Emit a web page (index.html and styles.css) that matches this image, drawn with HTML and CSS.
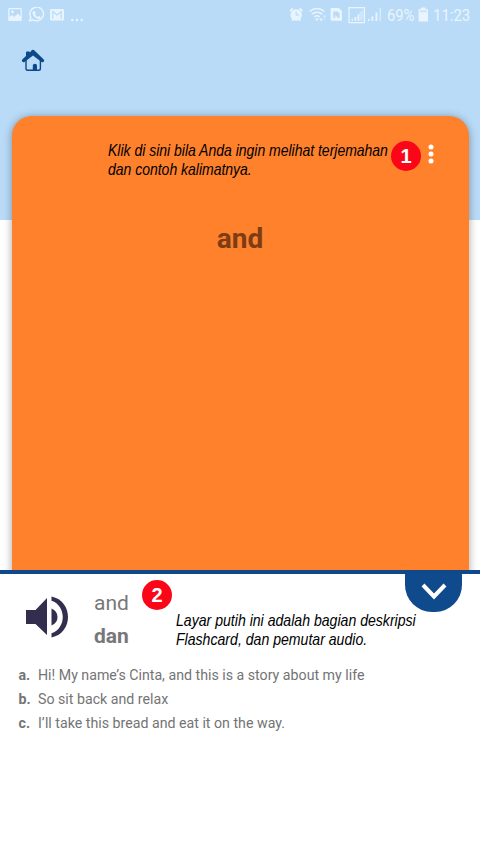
FILE: index.html
```html
<!DOCTYPE html>
<html lang="id">
<head>
<meta charset="utf-8">
<meta name="viewport" content="width=device-width, initial-scale=1">
<title>Flashcard</title>
<link rel="stylesheet" href="styles.css">
</head>
<body>
<div class="screen">
  <header class="status">
    <svg class="status-left" width="76" height="20" viewBox="0 0 76 20" fill="currentColor">
      <path fill-rule="evenodd" d="M1.500 1h11a1.300 1.300 0 0 1 1.300 1.300v10.400a1.300 1.300 0 0 1-1.300 1.300h-11a1.300 1.300 0 0 1-1.300-1.300V2.300A1.300 1.300 0 0 1 1.500 1zM1.500 2.300V10l2.500-2 2 2 4-3.500 2.600 3V2.300z"/>
      <circle cx="4.500" cy="5" r="1.400"/>
      <path d="M21.800 13.700l1-3.400a6.800 6.800 0 1 1 2.500 2.500z" fill="none" stroke="currentColor" stroke-width="1.400"/>
      <path d="M25.400 4.200l1.300-.3 1.100 2.300-.9 1.100c.7 1.300 1.500 2.100 2.800 2.700l1-1.100 2.200 1.100c0 1.300-1.100 2.100-2.300 2.100-3-.4-5.900-3.400-6.100-6 0-.8.300-1.500.9-1.900z"/>
      <rect x="42" y="2" width="14" height="11.500" rx="1.200"/>
      <path d="M44.800 12V4.500L49 8l4.200-3.500V12" fill="none" stroke="#b9dbf7" stroke-width="1.200"/>
      <circle cx="64.300" cy="13" r="1.200"/><circle cx="69" cy="13" r="1.200"/><circle cx="73.700" cy="13" r="1.200"/>
    </svg>
    <svg class="status-right" width="104" height="20" viewBox="0 0 104 20" fill="currentColor">
      <circle cx="7.200" cy="8" r="5.700"/>
      <path d="M1 4l3-2.500M13.400 4l-3-2.500M3 13.500l2-2M11.500 13.500l-2-2" stroke="currentColor" stroke-width="1.800"/>
      <path d="M7.200 4.500V8h3" fill="none" stroke="#b9dbf7" stroke-width="1.200"/>
      <g fill="none" stroke="currentColor" stroke-width="1.500"><path d="M20.500 4.500q7.500-6 15 0M22.800 7.200q5.200-4 10.400 0M25.200 9.800q2.800-2 5.600 0"/></g>
      <path d="M25.800 11.500h4L28 14zM30.200 11.500h3.600L32 14.500z"/><path opacity=".6" d="M34 10l1.700-2.500L37.400 10h-1.200v3h-1v-3z"/>
      <path fill-rule="evenodd" d="M42.800 1h7l3.200 3v8.700q0 1-1 1h-9.200q-1.200 0-1.200-1.200V2.200Q41.600 1 42.800 1zM44.300 4.500v6.500h2V8L49 11h1.500V6.500l-2-2z"/>
      <path d="M60 0.600h15.500v15H60z" fill="none" stroke="currentColor" stroke-width="1.200"/>
      <path d="M62.500 13.800v-2H64v2zM65.500 13.800V10h1.800v3.800zM68.500 13.800V7.500h1.800v6.300z"/><path opacity=".45" d="M70.500 13.800V5.500L74.500 2v11.800z"/>
      <path d="M79 14v-2h1.500v2zM82.500 14V9.500h1.800V14zM86.500 14V5.500h1.800V14z"/><path opacity=".6" d="M90.500 14V1H92v13z"/>
    </svg>
    <span class="percent">69%</span>
    <svg class="battery" width="11" height="16" viewBox="0 0 11 16" fill="currentColor"><path d="M3 .5h4.500V2H10v12.500H.6V2H3z"/><path d="M1.800 3.200h7v2.200h-7z" fill="#b9dbf7" opacity=".6"/></svg>
    <span class="clock">11:23</span>
  </header>
  <nav class="nav">
    <svg width="24" height="24" viewBox="0 0 24 24">
      <path d="M5 11V19.500q0 1.800 1.800 1.800h10.800q1.800 0 1.800-1.800V11" fill="none" stroke="#0d4888" stroke-width="1.400"/>
      <path d="M11.900 .8q1 0 1.800.9L22.500 10.200q1.400 1.200.4 2.300-1.300 1.300-2.700.2L12 6.500l-8.200 6.200q-1.400 1.100-2.600-.2-1-1.100.3-2.300L5 7V3.400q0-1 1-1h2.200l1 .9 1-1.600q.8-.9 1.700-.9z" fill="#0d4888"/>
      <path d="M11.800 22v-5.300q0-2 2.100-2t2.100 2V22z" fill="#0d4888"/>
    </svg>
  </nav>
  <main class="deck">
    <section class="card">
      <div class="card-top">
        <p class="hint"><span class="line">Klik di sini bila Anda ingin melihat terjemahan</span><span class="line">dan contoh kalimatnya.</span></p>
        <span class="badge">1</span>
        <svg class="more" width="6" height="20" viewBox="0 0 6 20" fill="#fff"><circle cx="3" cy="3" r="2.500"/><circle cx="3" cy="10" r="2.500"/><circle cx="3" cy="17" r="2.500"/></svg>
      </div>
      <h1 class="word">and</h1>
    </section>
  </main>
  <section class="details">
    <button class="toggle" aria-label="Tutup"><svg width="26" height="18" viewBox="0 0 26 18"><path d="M2 2l11 11.500L24 2" fill="none" stroke="#fff" stroke-width="4"/></svg></button>
    <div class="entry">
      <svg class="speaker" width="43" height="42" viewBox="0 0 43 42" fill="#332e4e"><path d="M0 14h9.500L21 2v37L9.500 28H0z"/><path d="M25.500 12.500q6 2.500 6 8.500t-6 8.500z"/><path d="M25.500 .5C47.500 5 47.500 37 25.500 41.500v-4.200c15-4.800 15-27.800 0-32.600z"/></svg>
      <div class="terms"><span class="term">and</span><strong class="term">dan</strong></div>
      <span class="badge second">2</span>
      <p class="hint"><span class="line">Layar putih ini adalah bagian deskripsi</span><span class="line">Flashcard, dan pemutar audio.</span></p>
    </div>
    <ul class="examples">
      <li><b>a.</b><span>Hi! My name’s Cinta, and this is a story about my life</span></li>
      <li><b>b.</b><span>So sit back and relax</span></li>
      <li><b>c.</b><span>I’ll take this bread and eat it on the way.</span></li>
    </ul>
  </section>
</div>
</body>
</html>
```
FILE: styles.css
```css
* { box-sizing: border-box; }
body { margin: 0; font-family: Roboto, "Liberation Sans", sans-serif; }
p, h1, ul { margin: 0; padding: 0; }
svg { display: block; flex: none; }

.screen {
  display: flex;
  flex-direction: column;
  width: 480px;
  height: 848px;
  overflow: hidden;
  background: linear-gradient(#b9dbf7 220px, #fff 220px);
}

.status {
  display: flex;
  align-items: flex-start;
  height: 48px;
  padding: 7px 0 0 8px;
  color: #e9f5fe;
  font-size: 17px;
  line-height: 17px;
}
.status-right { margin: 0 -8px 0 205px; }
.percent { width: 30px; margin-left: 2px; white-space: nowrap; transform: scaleX(.87); transform-origin: left; }
.battery { margin-left: 1px; }
.clock { margin-left: 4px; transform: scaleX(.88); transform-origin: left; }

.nav { height: 56px; padding: 1px 21px; }

.deck { height: 466px; padding: 12px 11.500px 0; overflow: hidden; }
.card {
  height: 480px;
  border-radius: 20px;
  background: #ff812c;
  box-shadow: 0 1px 9px rgba(0, 0, 0, .36);
}
.card-top { display: flex; height: 106px; padding: 25px 0 0 96px; }
.card-top .hint { width: 283.500px; }
.more { margin: 3px 0 0 7px; }
.word { color: #7c3d14; font-size: 28px; font-weight: 700; line-height: 34px; text-align: center; }

.hint { color: #000; font: italic 17px/19px "Liberation Sans", sans-serif; }
.line { display: block; width: max-content; transform: scaleX(.822); transform-origin: left; }

.badge {
  flex: none;
  width: 30px;
  height: 30px;
  border-radius: 50%;
  background: #fb0618;
  color: #fff;
  font: bold 20px/31px "Liberation Sans", sans-serif;
  text-align: center;
}

.details { position: relative; flex: 1; border-top: 4px solid #10498b; background: #fff; }
.toggle {
  position: absolute;
  top: -2px;
  right: 18px;
  display: flex;
  justify-content: center;
  width: 57px;
  height: 40px;
  padding: 11px 0 0;
  border: 0;
  border-radius: 3px 3px 27px 27px;
  background: #0f4a8d;
}
.entry { display: flex; height: 89px; padding-left: 26px; }
.speaker { margin-top: 22px; }
.terms { display: flex; flex-direction: column; width: 48px; margin: 13px 0 0 25px; }
.term { color: #777; font-size: 21px; line-height: 32.500px; }
.second { margin-top: 6px; }
.entry .hint { width: 245px; margin: 37px 0 0 4px; }
.entry .line { transform: scaleX(.829); }

.examples { list-style: none; padding-left: 18.500px; }
.examples li { display: flex; height: 24px; color: #747474; font-size: 14.200px; line-height: 24px; }
.examples b { width: 19.500px; }
.examples span { white-space: nowrap; }
```
